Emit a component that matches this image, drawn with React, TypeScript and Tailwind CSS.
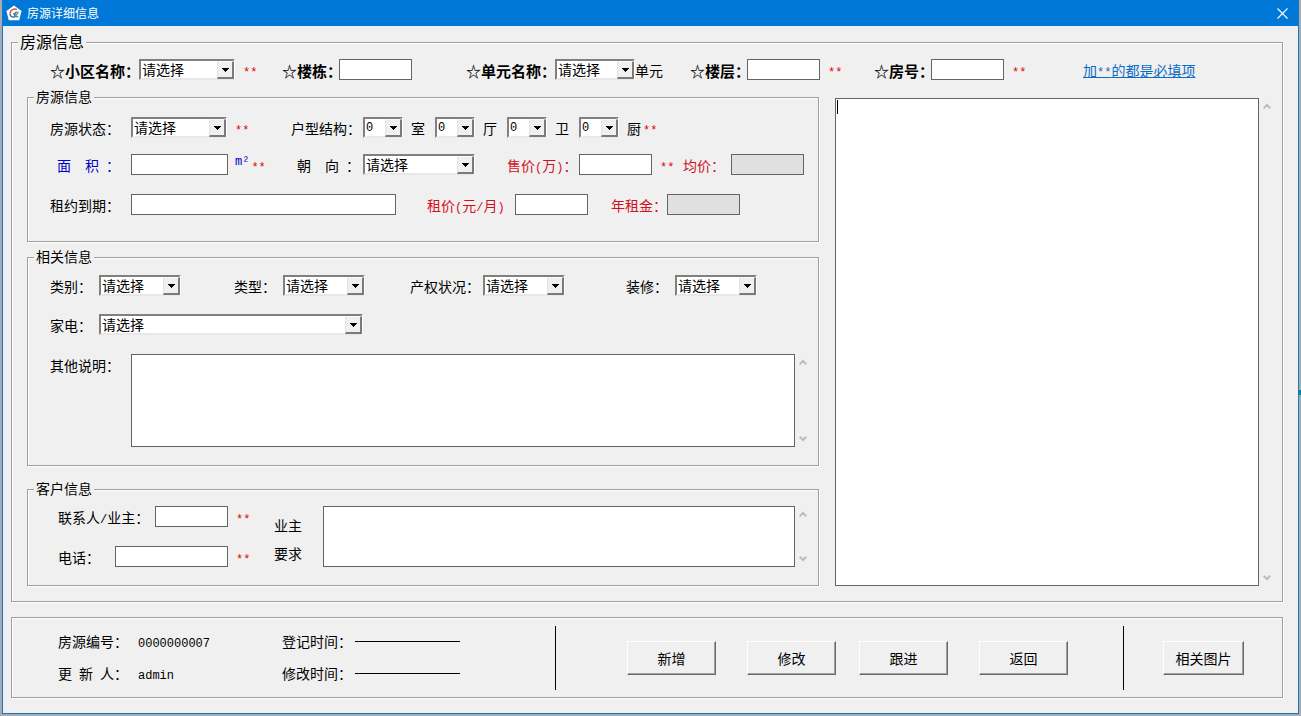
import React from 'react';
import clsx from 'clsx';

const PLACEHOLDER = '请选择';

/* ---------- small building blocks ---------- */

// Half-width characters (digits, brackets) use the mono face
const Half: React.FC<{ children: React.ReactNode }> = ({ children }) => (
  <span className="font-['Liberation_Mono',monospace] text-xs">{children}</span>
);

const Required: React.FC<{ className?: string }> = ({ className = 'ml-2' }) => (
  <span
    className={clsx(
      "h-[21px] pt-2 font-['Liberation_Mono',monospace] text-xs leading-[13px] text-[#e00000]",
      className,
    )}
  >
    **
  </span>
);

interface LabelProps {
  htmlFor: string;
  className?: string;
  children: React.ReactNode;
}

const Label: React.FC<LabelProps> = ({ htmlFor, className, children }) => (
  <label htmlFor={htmlFor} className={clsx('h-[21px] shrink-0 whitespace-pre pt-px leading-[21px]', className)}>
    {children}
  </label>
);

interface ControlProps {
  id: string;
  className?: string;
  disabled?: boolean;
}

const TextInput: React.FC<ControlProps> = ({ id, className = 'w-[73px]', disabled }) => (
  <input
    id={id}
    type="text"
    disabled={disabled}
    className={clsx(
      'h-[21px] shrink-0 border border-[#646464] px-1 outline-none',
      disabled ? 'bg-[#e0e0e0]' : 'bg-white',
      className,
    )}
  />
);

interface ComboProps extends ControlProps {
  numeric?: boolean;
}

const Combo: React.FC<ComboProps> = ({ id, className, numeric }) => (
  <div className={clsx('relative h-[21px] shrink-0', className)}>
    <select
      id={id}
      className={clsx(
        'block h-full w-full appearance-none border-2 border-t-[#808080] border-r-white border-b-[#e8e8e8] border-l-[#808080] bg-white pl-px outline-none',
        numeric ? "pt-[2px] font-['Liberation_Mono',monospace] text-xs leading-[15px]" : 'leading-[17px]',
      )}
    >
      {numeric ? [0, 1, 2, 3, 4, 5].map((n) => <option key={n}>{n}</option>) : <option>{PLACEHOLDER}</option>}
    </select>
    <span className="pointer-events-none absolute top-[2px] right-px bottom-px flex w-[17px] items-center justify-center border-t border-r-2 border-b-2 border-l border-t-[#f8f8f8] border-r-[#7a7a7a] border-b-[#7a7a7a] border-l-[#e3e3e3] bg-[#f0f0f0]">
      <svg width="7" height="4" viewBox="0 0 7 4" shapeRendering="crispEdges">
        <path d="M0 0h7v1h-1v1h-1v1h-1v1h-1v-1h-1v-1h-1v-1h-1z" fill="#000" />
      </svg>
    </span>
  </div>
);

const ScrollArrows: React.FC = () => (
  <div className="flex w-4 shrink-0 flex-col items-center justify-between py-[5px]" aria-hidden="true">
    <svg width="8" height="7" viewBox="0 0 8 7" fill="none" stroke="#bcbcbc" strokeWidth="2">
      <path d="M0.7 5.3L4 2l3.3 3.3" />
    </svg>
    <svg width="8" height="7" viewBox="0 0 8 7" fill="none" stroke="#bcbcbc" strokeWidth="2">
      <path d="M0.7 1.7L4 5l3.3-3.3" />
    </svg>
  </div>
);

interface GroupProps {
  title: string;
  large?: boolean;
  className?: string;
  children: React.ReactNode;
}

const etched = 'border border-[#a0a0a0] shadow-[1px_1px_0_#fff,inset_1px_1px_0_#fff]';

const Group: React.FC<GroupProps> = ({ title, large, className, children }) => (
  <fieldset className={clsx('min-w-0', etched, className)}>
    <legend className={clsx('ml-[6px] h-4 bg-[#f0f0f0] px-[2px]', large ? 'text-base/[14px]' : 'text-sm/[14px]')}>
      {title}
    </legend>
    {children}
  </fieldset>
);

const PushButton: React.FC<{ className?: string; children: React.ReactNode }> = ({
  className = 'w-[89px]',
  children,
}) => (
  <button
    type="button"
    className={clsx(
      'h-[34px] shrink-0 border border-t-white border-r-[#696969] border-b-[#696969] border-l-white bg-[#f0f0f0] shadow-[inset_-1px_-1px_0_#a0a0a0] active:border-[#696969]',
      className,
    )}
  >
    {children}
  </button>
);

/* ---------- sections ---------- */

const TitleBar: React.FC = () => (
  <header className="flex h-[26px] shrink-0 items-center bg-[#0078d7] pl-[3px] text-xs text-white">
    <svg width="16" height="16" viewBox="0 0 16 16" fill="none" className="mr-[5px]">
      <path d="M8 0.5l7.6 5.4-2.4 9.3H2.8L0.4 5.9z" fill="#fff" />
      <path d="M11 4.6C8 3 4.2 5 4 8.4" stroke="#e0524a" strokeWidth="1.5" />
      <path d="M4 8.4c0 3 2.4 4.2 4.4 3.4l.8-3H7" stroke="#3c5a8c" strokeWidth="1.3" />
      <path d="M8.6 7.4h3.4l-2.6 4.2h3" stroke="#3c9a8c" strokeWidth="1.2" />
    </svg>
    <h1 className="flex-1">房源详细信息</h1>
    <button type="button" aria-label="关闭" className="flex h-full w-[31px] items-center justify-center">
      <svg width="11" height="11" viewBox="0 0 11 11" stroke="#fff" strokeWidth="1.1">
        <path d="M0.5 0.5l10 10M10.5 0.5l-10 10" />
      </svg>
    </button>
  </header>
);

const LocationRow: React.FC = () => (
  <div className="flex items-center pt-[9px] pl-[38px]">
    <div className="flex w-[232px] items-center">
      <Label htmlFor="community" className="w-[89px] text-[15px] font-bold">☆小区名称：</Label>
      <Combo id="community" className="w-24" />
      <Required />
    </div>
    <div className="flex w-[184px] items-center">
      <Label htmlFor="building" className="w-[57px] text-[15px] font-bold">☆楼栋：</Label>
      <TextInput id="building" />
    </div>
    <div className="flex w-[224px] items-center">
      <Label htmlFor="unit" className="w-[89px] text-[15px] font-bold">☆单元名称：</Label>
      <Combo id="unit" className="w-20" />
      <Label htmlFor="unit">单元</Label>
    </div>
    <div className="flex w-[184px] items-center">
      <Label htmlFor="floor" className="w-[57px] text-[15px] font-bold">☆楼层：</Label>
      <TextInput id="floor" />
      <Required />
    </div>
    <div className="flex w-[209px] items-center">
      <Label htmlFor="room" className="w-[57px] text-[15px] font-bold">☆房号：</Label>
      <TextInput id="room" />
      <Required />
    </div>
    <a href="#required" className="h-[21px] pt-px leading-[21px] whitespace-nowrap text-[#0a6cc4] underline">
      加<Half>**</Half>的都是必填项
    </a>
  </div>
);

const layoutUnits = [
  { id: 'bedrooms', unit: '室' },
  { id: 'livingrooms', unit: '厅' },
  { id: 'bathrooms', unit: '卫' },
  { id: 'kitchens', unit: '厨' },
];

const HouseGroup: React.FC = () => (
  <Group title="房源信息" className="pb-[26px]">
    <div className="flex items-center pt-3 pl-[22px]">
      <div className="flex w-[241px] items-center">
        <Label htmlFor="status" className="w-[81px]">房源状态：</Label>
        <Combo id="status" className="w-24" />
        <Required />
      </div>
      <Label htmlFor="bedrooms" className="w-[72px]">户型结构：</Label>
      {layoutUnits.map(({ id, unit }) => (
        <React.Fragment key={id}>
          <Combo id={id} className="w-10" numeric />
          <Label htmlFor={id} className="w-8 pl-2">{unit}</Label>
        </React.Fragment>
      ))}
      <Required className="-ml-2" />
    </div>

    <div className="flex items-center pt-4 pl-[22px]">
      <div className="flex w-[241px] items-center">
        <Label htmlFor="area" className="w-[81px] pl-[7px] text-[#0000c8]">{'面　积\u2002：'}</Label>
        <TextInput id="area" className="w-[97px]" />
        <span className="ml-[7px] self-start font-['Liberation_Mono',monospace] text-xs text-[#0000c8]">m²</span>
        <Required className="ml-[2px]" />
      </div>
      <div className="flex w-[216px] items-center">
        <Label htmlFor="facing" className="w-[72px] pl-[6px]">{'朝　向\u2002：'}</Label>
        <Combo id="facing" className="w-28" />
      </div>
      <div className="flex w-[176px] items-center">
        <Label htmlFor="price" className="w-[72px] text-[#d01020]">
          售价<Half>(</Half>万<Half>)</Half>：
        </Label>
        <TextInput id="price" />
        <Required />
      </div>
      <Label htmlFor="avg" className="w-12 text-[#d01020]">均价：</Label>
      <TextInput id="avg" disabled />
    </div>

    <div className="flex items-center pt-[19px] pl-[22px]">
      <div className="flex w-[377px] items-center">
        <Label htmlFor="lease" className="w-[81px]">租约到期：</Label>
        <TextInput id="lease" className="w-[265px]" />
      </div>
      <div className="flex w-[184px] items-center">
        <Label htmlFor="rent" className="w-[88px] text-[#d01020]">
          租价<Half>(</Half>元<Half>/</Half>月<Half>)</Half>
        </Label>
        <TextInput id="rent" />
      </div>
      <Label htmlFor="yearly" className="w-14 text-[#d01020]">年租金：</Label>
      <TextInput id="yearly" disabled />
    </div>
  </Group>
);

const RelatedGroup: React.FC = () => (
  <Group title="相关信息" className="mt-[7px] pb-[18px]">
    <div className="flex items-center pt-[10px] pl-[22px]">
      <div className="flex w-[184px] items-center">
        <Label htmlFor="category" className="w-[49px]">类别：</Label>
        <Combo id="category" className="w-[82px]" />
      </div>
      <div className="flex w-[176px] items-center">
        <Label htmlFor="type" className="w-[49px]">类型：</Label>
        <Combo id="type" className="w-[82px]" />
      </div>
      <div className="flex w-[216px] items-center">
        <Label htmlFor="ownership" className="w-[73px]">产权状况：</Label>
        <Combo id="ownership" className="w-[82px]" />
      </div>
      <Label htmlFor="decoration" className="w-[49px]">装修：</Label>
      <Combo id="decoration" className="w-[82px]" />
    </div>

    <div className="flex items-center pt-[18px] pl-[22px]">
      <Label htmlFor="appliances" className="w-[49px]">家电：</Label>
      <Combo id="appliances" className="w-[264px]" />
    </div>

    <div className="flex pt-[19px] pr-[7px] pl-[22px]">
      <Label htmlFor="notes" className="w-[81px]">其他说明：</Label>
      <textarea
        id="notes"
        className="h-[93px] min-w-0 flex-1 resize-none border border-[#646464] bg-white p-1 outline-none"
      />
      <ScrollArrows />
    </div>
  </Group>
);

const CustomerGroup: React.FC = () => (
  <Group title="客户信息" className="mt-[15px] pb-[18px]">
    <div className="flex pt-[9px] pr-[7px] pl-[30px]">
      <div className="flex w-[216px] flex-col gap-[19px]">
        <div className="flex items-center">
          <Label htmlFor="contact" className="w-[97px]">联系人<Half>/</Half>业主：</Label>
          <TextInput id="contact" />
          <Required />
        </div>
        <div className="flex items-center">
          <Label htmlFor="phone" className="w-[57px]">电话：</Label>
          <TextInput id="phone" className="w-[113px]" />
          <Required />
        </div>
      </div>
      <label htmlFor="demand" className="flex h-[61px] w-[49px] flex-col pt-[5px] leading-7">
        <span>业主</span>
        <span>要求</span>
      </label>
      <textarea
        id="demand"
        className="h-[61px] min-w-0 flex-1 resize-none border border-[#646464] bg-white p-1 outline-none"
      />
      <ScrollArrows />
    </div>
  </Group>
);

const Footer: React.FC = () => (
  <footer className={clsx('mt-[15px] flex items-center pt-2 pb-[7px]', etched)}>
    <dl className="grid grid-cols-[80px_144px_73px_105px] items-center gap-y-[2px] self-start pl-[46px] leading-[30px] whitespace-pre">
      <dt>房源编号：</dt>
      <dd><Half>0000000007</Half></dd>
      <dt>登记时间：</dt>
      <dd className="h-px bg-black" />
      <dt>{'更\u2002新\u2002人：'}</dt>
      <dd><Half>admin</Half></dd>
      <dt>修改时间：</dt>
      <dd className="h-px bg-black" />
    </dl>
    <div className="ml-[95px] h-16 w-px bg-black" />
    <div className="ml-[71px] flex gap-[31px]">
      <PushButton>新增</PushButton>
      <PushButton>修改</PushButton>
    </div>
    <div className="ml-[23px] flex gap-[31px]">
      <PushButton>跟进</PushButton>
      <PushButton>返回</PushButton>
    </div>
    <div className="ml-auto h-16 w-px bg-black" />
    <div className="pr-[38px] pl-[39px]">
      <PushButton className="w-[81px]">相关图片</PushButton>
    </div>
  </footer>
);

export default function App() {
  return (
    <div className="relative flex min-h-screen flex-col bg-[#a4adb5] px-[2px] pb-[2px] font-['Noto_Sans_CJK_SC',sans-serif] text-sm text-black">
      <div className="flex flex-1 flex-col border-x border-b border-[#1a78c2] bg-[#f0f0f0]">
        <TitleBar />
        <main className="pt-2 pr-[15px] pb-[15px] pl-2">
          <Group title="房源信息" large className="pb-[15px]">
            <LocationRow />
            <div className="flex gap-4 pt-[9px] pr-[7px] pl-[15px]">
              <div className="w-[792px] shrink-0">
                <HouseGroup />
                <RelatedGroup />
                <CustomerGroup />
              </div>
              <div className="flex min-w-0 flex-1 pt-[9px]">
                <div className="relative min-w-0 flex-1">
                  <textarea
                    aria-label="详细描述"
                    className="block h-full w-full resize-none border border-[#646464] bg-white p-1 outline-none"
                  />
                  {/* text cursor */}
                  <span className="pointer-events-none absolute top-[2px] left-[2px] h-[14px] w-px bg-black" />
                </div>
                <ScrollArrows />
              </div>
            </div>
          </Group>
          <Footer />
        </main>
      </div>
      <span className="absolute top-[390px] right-0 h-[5px] w-[3px] bg-[#0f7fa8]" />
    </div>
  );
}
